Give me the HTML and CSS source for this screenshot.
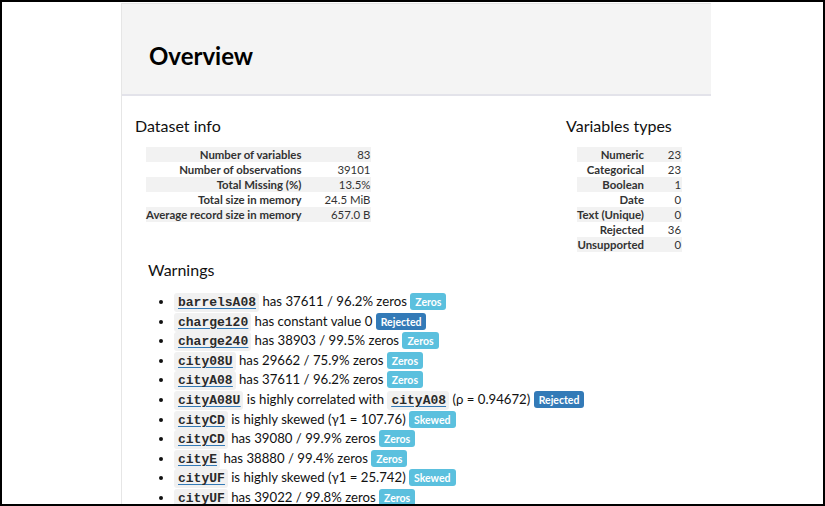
FILE: index.html
```html
<!DOCTYPE html>
<html>
<head>
<meta charset="utf-8">
<link rel="stylesheet" href="styles.css">
</head>
<body>
<div class="frame">
  <div class="panel">
    <div class="panel-header"><h1 class="title">Overview</h1></div>
    <div class="panel-body">
      <div class="top-row">
        <div class="col col-info">
          <h3 class="sub">Dataset info</h3>
          <table class="stats stats-info">
            <tr><th>Number of variables</th><td>83</td></tr>
            <tr><th>Number of observations</th><td>39101</td></tr>
            <tr><th>Total Missing (%)</th><td>13.5%</td></tr>
            <tr><th>Total size in memory</th><td>24.5 MiB</td></tr>
            <tr><th>Average record size in memory</th><td>657.0 B</td></tr>
          </table>
        </div>
        <div class="col col-types">
          <h3 class="sub">Variables types</h3>
          <table class="stats stats-types">
            <tr><th>Numeric</th><td>23</td></tr>
            <tr><th>Categorical</th><td>23</td></tr>
            <tr><th>Boolean</th><td>1</td></tr>
            <tr><th>Date</th><td>0</td></tr>
            <tr><th>Text (Unique)</th><td>0</td></tr>
            <tr><th>Rejected</th><td>36</td></tr>
            <tr><th>Unsupported</th><td>0</td></tr>
          </table>
        </div>
      </div>
      <div class="warnings">
        <h3 class="sub">Warnings</h3>
        <ul class="warn-list">
          <li><a class="var"><code>barrelsA08</code></a> has 37611 / 96.2% zeros <span class="badge info">Zeros</span></li>
          <li><a class="var"><code>charge120</code></a> has constant value 0 <span class="badge primary">Rejected</span></li>
          <li><a class="var"><code>charge240</code></a> has 38903 / 99.5% zeros <span class="badge info">Zeros</span></li>
          <li><a class="var"><code>city08U</code></a> has 29662 / 75.9% zeros <span class="badge info">Zeros</span></li>
          <li><a class="var"><code>cityA08</code></a> has 37611 / 96.2% zeros <span class="badge info">Zeros</span></li>
          <li><a class="var"><code>cityA08U</code></a> is highly correlated with <a class="var"><code>cityA08</code></a> (ρ = 0.94672) <span class="badge primary">Rejected</span></li>
          <li><a class="var"><code>cityCD</code></a> is highly skewed (γ1 = 107.76) <span class="badge info">Skewed</span></li>
          <li><a class="var"><code>cityCD</code></a> has 39080 / 99.9% zeros <span class="badge info">Zeros</span></li>
          <li><a class="var"><code>cityE</code></a> has 38880 / 99.4% zeros <span class="badge info">Zeros</span></li>
          <li><a class="var"><code>cityUF</code></a> is highly skewed (γ1 = 25.742) <span class="badge info">Skewed</span></li>
          <li><a class="var"><code>cityUF</code></a> has 39022 / 99.8% zeros <span class="badge info">Zeros</span></li>
        </ul>
      </div>
    </div>
  </div>
</div>
</body>
</html>
```
FILE: styles.css
```css
html, body {
  margin: 0;
  padding: 0;
  background: #fff;
}
body {
  font-family: Lato, "Liberation Sans", sans-serif;
  color: #222;
}
.frame {
  width: 825px;
  height: 506px;
  box-sizing: border-box;
  border: 2px solid #000;
  overflow: hidden;
  background: #fff;
}
.panel {
  margin-left: 119px;
  margin-top: 1px;
  width: 589px;
  height: 600px;
  border-left: 1px solid #e6e6e6;
  border-top: 1px solid #e6e6e6;
}
.panel-header {
  background: #f4f4f4;
  height: 90px;
  border-bottom: 2px solid #e3e3ea;
  display: flex;
  align-items: center;
  padding-left: 27px;
}
.title {
  margin: 0;
  padding-top: 14px;
  font-size: 24px;
  font-weight: 700;
  color: #000;
  line-height: 30px;
}
.panel-body {
  padding: 20px 0 0 13px;
}
.top-row {
  display: flex;
  justify-content: space-between;
  padding-right: 29px;
}
.sub {
  margin: 0;
  font-size: 16px;
  font-weight: 400;
  line-height: 20px;
  color: #111;
}
.stats {
  border-collapse: collapse;
  margin: 11px 0 0 11px;
  font-size: 11.4px;
  color: #333;
}
.stats th {
  font-weight: 700;
  text-align: right;
  padding: 0;
  height: 15px;
  line-height: 15px;
  white-space: nowrap;
}
.stats td {
  text-align: right;
  padding: 0 1px 0 0;
  line-height: 15px;
  white-space: nowrap;
}
.stats tr:nth-child(odd) {
  background: #f2f2f2;
}
.stats-info td {
  width: 69px;
}
.stats-types td {
  width: 37px;
}
.warnings {
  margin-top: 8px;
  padding-left: 13px;
}
.warn-list {
  margin: 12px 0 0;
  padding-left: 26px;
  font-size: 13.2px;
  line-height: 19.6px;
  color: #111;
}
.warn-list li {
  white-space: nowrap;
  height: 19.6px;
}
.var {
  text-decoration: underline;
  text-decoration-color: #337ab7;
  text-underline-offset: 2px;
  color: #333;
}
.var code {
  font-family: "Liberation Mono", "Courier New", monospace;
  font-weight: 700;
  font-size: 13px;
  line-height: 1;
  background: #f1f1f1;
  padding: 2px 3px 2px 4px;
  border-radius: 3px;
  color: #2a2a2a;
  text-decoration: underline;
  text-decoration-color: #337ab7;
  text-underline-offset: 2px;
}
.badge {
  display: inline-block;
  font-size: 10.5px;
  font-weight: 700;
  color: #fff;
  line-height: 12px;
  padding: 3px 5px 2px;
  border-radius: 3px;
  vertical-align: 0;
}
.badge.info {
  background: #5bc0de;
}
.badge.primary {
  background: #337ab7;
}
```
